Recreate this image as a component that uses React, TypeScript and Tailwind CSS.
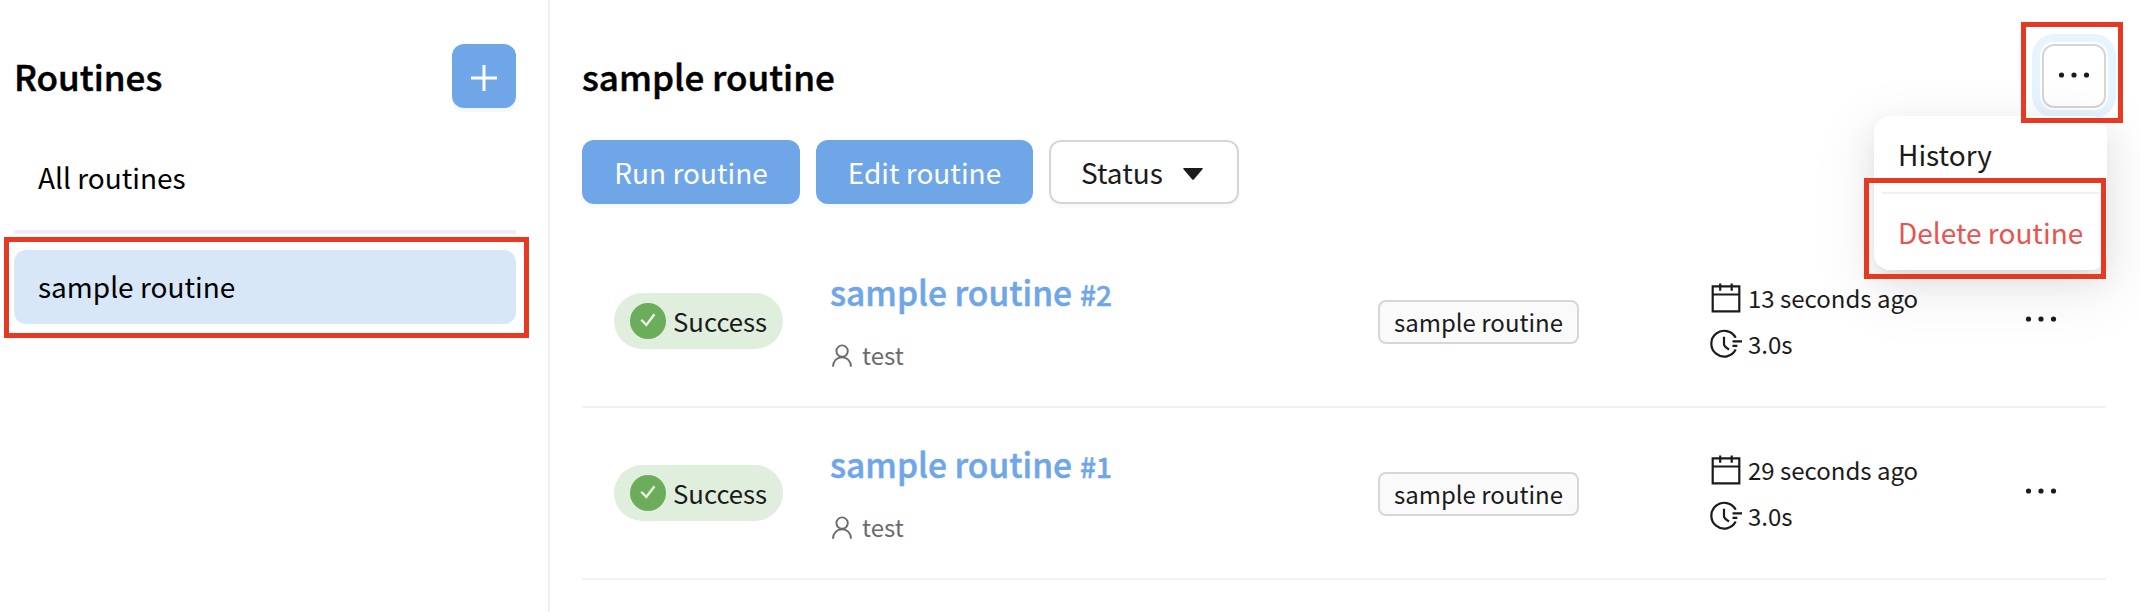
import React from "react";

type Run = { id: number; when: string; duration: string };

const runs: Run[] = [
  { id: 2, when: "13 seconds ago", duration: "3.0s" },
  { id: 1, when: "29 seconds ago", duration: "3.0s" },
];

function Dots({ className = "" }: { className?: string }) {
  return (
    <svg className={className} width="32" height="8" viewBox="0 0 32 8" fill="#1b1b1b">
      <circle cx="3.5" cy="4" r="2.6" />
      <circle cx="16" cy="4" r="2.6" />
      <circle cx="28.5" cy="4" r="2.6" />
    </svg>
  );
}

function CalendarIcon() {
  return (
    <svg width="32" height="32" viewBox="0 0 32 32" fill="none" stroke="#1b1b1b" strokeWidth="2.2">
      <path d="M2.700 4.300h26.600v25H2.700zM2.700 12.500h26.600M10.200 1.500v7.200M21.700 1.500v7.200" />
    </svg>
  );
}

function DurationIcon() {
  return (
    <svg width="32" height="32" viewBox="0 0 32 32" fill="none" stroke="#1b1b1b" strokeWidth="2.2">
      <path d="M25.700 9.800A12.900 12.900 0 1 0 25.700 21.600" />
      <path d="M14 8.700v7.600c0 2 2.400 3.600 5 5.200M22.500 13.300h9.500M22.500 17.800h4.800" />
    </svg>
  );
}

function UserIcon() {
  return (
    <svg width="20" height="24" viewBox="0 0 20 24" fill="none" stroke="#6b6c6f" strokeWidth="1.9">
      <circle cx="10.1" cy="8.1" r="5.7" />
      <path d="M1 23.700c0-5.600 4-9.500 9-9.500s9 3.900 9 9.500" />
    </svg>
  );
}

function RunRow({ run }: { run: Run }) {
  return (
    <div className="flex h-[172px] border-b-2 border-[#f0f0f0] pl-8">
      <div className="w-[216px] pt-[57px]">
        <div className="flex h-14 w-[169px] items-center rounded-full bg-[#e0eedd] pl-4">
          <span className="flex size-9 items-center justify-center rounded-full bg-[#6bad5a] pb-0.5">
            <svg width="16" height="14" viewBox="0 0 16 14" fill="none" stroke="#e9f5e6" strokeWidth="2.4">
              <path d="M1.300 6.700 6.300 12 14.500 1.300" />
            </svg>
          </span>
          <span className="ml-[7px] text-[25.700px] leading-[56px]">Success</span>
        </div>
      </div>
      <div className="w-[548px] pt-[30px]">
        <div className="flex h-[52px] items-baseline text-[#6fa6e7] [-webkit-text-stroke:0.5px_#6fa6e7]">
          <span className="text-[33.500px] leading-[52px] font-medium">sample routine</span>
          <span className="ml-2 text-[28px] leading-[52px] font-medium">#{run.id}</span>
        </div>
        <div className="mt-[19px] flex items-center gap-[10px] pl-0.5 text-[#6b6c6f]">
          <UserIcon />
          <span className="text-[24px] leading-9">test</span>
        </div>
      </div>
      <div className="w-[331px] pt-16">
        <div className="flex h-11 w-[201px] items-center justify-center rounded-lg border-2 border-[#d6d6d6] bg-[#fafafa] text-[24px] leading-10">
          sample routine
        </div>
      </div>
      <div className="flex w-[316px] flex-col pt-[39px] pl-px text-[24px] leading-[46px]">
        <div className="flex h-[46px] items-center gap-[6px]">
          <CalendarIcon />
          <span>{run.when}</span>
        </div>
        <div className="flex h-[46px] items-center gap-[6px]">
          <DurationIcon />
          <span>{run.duration}</span>
        </div>
      </div>
      <Dots className="mt-[79px] shrink-0" />
    </div>
  );
}

function ActionsMenu() {
  return (
    <div className="absolute top-[116px] left-[1874px] z-10 h-[154px] w-[233px] rounded-2xl bg-white px-2 shadow-[0_12px_32px_0_rgba(0,0,0,0.08),0_6px_12px_-8px_rgba(0,0,0,0.12),0_18px_56px_16px_rgba(0,0,0,0.05)]">
      <div className="h-[76px] pl-4 text-[28px] leading-[76px]">History</div>
      <div className="h-0.5 bg-[#f0f0f0]" />
      <div className="h-[76px] pl-4 text-[28px] leading-[76px] whitespace-nowrap text-[#ea5350]">Delete routine</div>
    </div>
  );
}

export default function App() {
  return (
    <div className="relative flex h-[612px] w-[2140px] overflow-hidden bg-white font-['Noto_Sans_CJK_JP','Noto_Sans_CJK_SC',sans-serif] text-[#1b1b1b]">
      <aside className="w-[550px] shrink-0 border-r-2 border-[#eeeff2] pt-11 pr-8 pl-3.5 text-black">
        <div className="flex h-16 items-center justify-between">
          <h1 className="text-[35px] leading-[64px] font-medium [-webkit-text-stroke:0.5px_#000]">Routines</h1>
          <button className="flex size-16 items-center justify-center rounded-xl bg-[#6fa6e7] pt-[3px] shadow-[0_4px_0_#f4f9ff]">
            <svg width="26" height="26" viewBox="0 0 26 26" stroke="#fff" strokeWidth="3">
              <path d="M13 0v26M0 13h26" />
            </svg>
          </button>
        </div>
        <div className="mt-[33px] h-[74px] pl-6 text-[28px] leading-[72px]">All routines</div>
        <div className="mt-[15px] h-1 bg-[#eeeff2]" />
        <div className="mt-4 h-[74px] rounded-xl bg-[#d8e7f8] pl-6 text-[28px] leading-[72px]">sample routine</div>
      </aside>
      <main className="w-[1556px] pt-11 pl-8">
        <div className="flex h-16 items-center justify-between">
          <h2 className="text-[35px] leading-[64px] font-medium text-black [-webkit-text-stroke:0.5px_#000]">sample routine</h2>
          <button className="flex size-16 shrink-0 justify-center rounded-xl border-2 border-[#d6d6d6] bg-white pt-[24.500px] shadow-[0_0_0_2px_#fff,0_0_0_10px_#e6f4ff]">
            <Dots />
          </button>
        </div>
        <div className="mt-8 flex gap-4 text-[28px] leading-[64px]">
          <button className="h-16 w-[218px] rounded-xl bg-[#6fa6e7] text-white shadow-[0_4px_0_#f7faff]">Run routine</button>
          <button className="h-16 w-[217px] rounded-xl bg-[#6fa6e7] text-white shadow-[0_4px_0_#f7faff]">Edit routine</button>
          <button className="flex h-16 w-[190px] items-center rounded-xl border-2 border-[#d6d6d6] bg-white pl-[30px] shadow-[0_4px_0_#fafafa]">
            <span>Status</span>
            <svg className="mt-1 ml-5" width="20" height="12" viewBox="0 0 20 12" fill="#1b1b1b">
              <path d="M1 0h18q1.500 0 .5 1.300L11 11.200q-1 1.100-2 0L.5 1.300Q-.5 0 1 0z" />
            </svg>
          </button>
        </div>
        <div className="mt-8">
          {runs.map((run) => (
            <RunRow key={run.id} run={run} />
          ))}
        </div>
      </main>
      <ActionsMenu />
      <div className="absolute top-[237px] left-1 z-20 h-[101px] w-[525px] border-[5px] border-[#e63921]" />
      <div className="absolute top-[22px] left-[2021px] z-20 h-[101px] w-[102px] border-[5px] border-[#e63921]" />
      <div className="absolute top-[178px] left-[1864px] z-20 h-[101px] w-[242px] border-[5px] border-[#e63921]" />
    </div>
  );
}
